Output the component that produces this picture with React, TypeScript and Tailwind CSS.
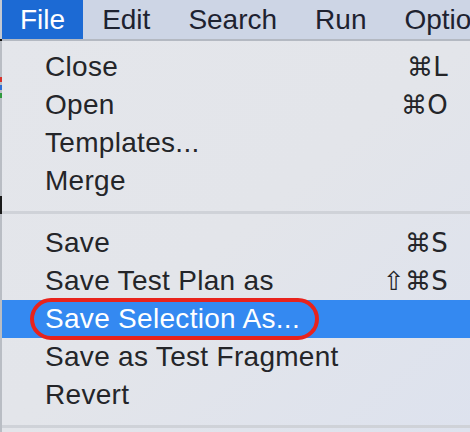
const menuBar = ['File', 'Edit', 'Search', 'Run', 'Options'];

type Row = { label: string; shortcut?: string; selected?: boolean } | 'sep';

const rows: Row[] = [
  { label: 'Close', shortcut: '⌘L' },
  { label: 'Open', shortcut: '⌘O' },
  { label: 'Templates...' },
  { label: 'Merge' },
  'sep',
  { label: 'Save', shortcut: '⌘S' },
  { label: 'Save Test Plan as', shortcut: '⇧⌘S' },
  { label: 'Save Selection As...', selected: true },
  { label: 'Save as Test Fragment' },
  { label: 'Revert' },
  'sep',
];

export default function App() {
  return (
    <div
      className="w-[470px] h-[432px] overflow-hidden flex bg-[#e3e6ec] text-[28px] leading-none"
      style={{ fontFamily: '"Liberation Sans", "DejaVu Sans", sans-serif' }}
    >
      {/* window behind the menu */}
      <div className="w-[2px] shrink-0 flex flex-col bg-[#b9bdc4]">
        <div className="h-[39px] bg-[#c4c9d2]"></div>
        <div className="h-[2px] bg-[#111]"></div>
        <div className="h-[36px]"></div>
        <div className="h-[5px] bg-[#d8322b]"></div>
        <div className="h-[3px]"></div>
        <div className="h-[5px] bg-[#2f6fd6]"></div>
        <div className="h-[3px]"></div>
        <div className="h-[5px] bg-[#2f9a3e]"></div>
        <div className="h-[98px]"></div>
        <div className="h-[18px] bg-[#1a1a1a]"></div>
      </div>

      <div className="flex-1 flex flex-col min-w-0">
        {/* menu bar */}
        <div className="h-[41px] shrink-0 flex bg-[#cdd5e5] border-b-2 border-[#b4b9c2] text-[#1e2230] whitespace-nowrap">
          {menuBar.map((m, i) => (
            <div
              key={m}
              className={
                i === 0
                  ? 'h-full flex items-center px-[18px] bg-[#1c6ad4] text-white'
                  : 'h-full flex items-center px-[19px]'
              }
            >
              {m}
            </div>
          ))}
        </div>

        {/* dropdown */}
        <div className="relative flex-1 flex flex-col pt-[7px] bg-gradient-to-br from-[#e4e6eb] via-[#e3e5ea] to-[#dde2ee] text-[#242529] tracking-[0.3px]">
          {rows.map((r, i) =>
            r === 'sep' ? (
              <div key={i} className="h-[24px] shrink-0 flex items-center">
                <div className="w-full h-[3px] bg-[#cfd2d8]"></div>
              </div>
            ) : (
              <div
                key={i}
                className={
                  r.selected
                    ? 'h-[38px] shrink-0 flex items-center justify-between pl-[43px] pr-[22px] bg-[#3489f1] text-white'
                    : 'h-[38px] shrink-0 flex items-center justify-between pl-[43px] pr-[22px]'
                }
              >
                <span>{r.label}</span>
                {r.shortcut && <span style={{ fontFamily: '"DejaVu Sans", sans-serif' }} className="text-[26px]">{r.shortcut}</span>}
              </div>
            )
          )}

          {/* annotation around the selected item */}
          <div className="absolute left-[28px] top-[257px] w-[289px] h-[42px] rounded-full border-[4px] border-[#e8231c] pointer-events-none"></div>
        </div>
      </div>
    </div>
  );
}
